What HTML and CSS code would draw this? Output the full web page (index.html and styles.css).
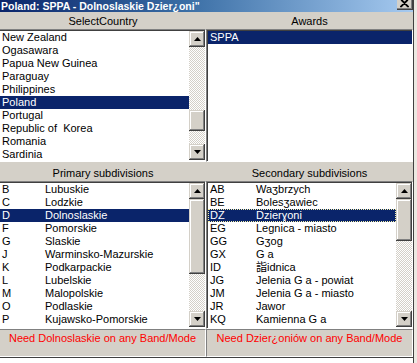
FILE: index.html
```html
<!DOCTYPE html>
<html lang="pl">
<head>
    <meta charset="UTF-8">
    <title>Poland: SPPA</title>
    <link rel="stylesheet" href="styles.css">
</head>
<body>
<div class="screen">
    <div class="window">
        <div class="titlebar">
            <span class="title">Poland: SPPA - Dolnoslaskie Dzier¿oni"</span>
            <span class="close-btn">
                <svg width="9" height="8" viewBox="0 0 9 8"><path d="M1 0 L8 7 M2 0 L9 7 M8 0 L1 7 M7 0 L0 7" stroke="#000" stroke-width="1.1" fill="none"/></svg>
            </span>
        </div>

        <div class="panes">
            <div class="pane-head">SelectCountry</div>
            <div class="pane-head">Awards</div>

            <!-- countries -->
            <div class="listbox first-col">
                <div class="rows">
                    <div class="row">New Zealand</div>
                    <div class="row">Ogasawara</div>
                    <div class="row">Papua New Guinea</div>
                    <div class="row">Paraguay</div>
                    <div class="row">Philippines</div>
                    <div class="row sel">Poland</div>
                    <div class="row">Portugal</div>
                    <div class="row">Republic of&nbsp; Korea</div>
                    <div class="row">Romania</div>
                    <div class="row">Sardinia</div>
                </div>
                <div class="scrollbar">
                    <div class="sb-btn"><svg width="7" height="4" viewBox="0 0 7 4"><path d="M3.5 0 L7 4 L0 4 Z"/></svg></div>
                    <div class="sb-track"><div class="sb-thumb" style="margin-top: 63px; height: 21px;"></div></div>
                    <div class="sb-btn"><svg width="7" height="4" viewBox="0 0 7 4"><path d="M0 0 L7 0 L3.5 4 Z"/></svg></div>
                </div>
            </div>

            <!-- awards -->
            <div class="listbox">
                <div class="rows">
                    <div class="row sel">SPPA</div>
                </div>
            </div>

            <div class="pane-head lower">Primary subdivisions</div>
            <div class="pane-head lower">Secondary subdivisions</div>

            <div class="listbox first-col">
                <div class="rows">
                    <div class="row"><span class="code">B</span>Lubuskie</div>
                    <div class="row"><span class="code">C</span>Lodzkie</div>
                    <div class="row sel"><span class="code">D</span>Dolnoslaskie</div>
                    <div class="row"><span class="code">F</span>Pomorskie</div>
                    <div class="row"><span class="code">G</span>Slaskie</div>
                    <div class="row"><span class="code">J</span>Warminsko-Mazurskie</div>
                    <div class="row"><span class="code">K</span>Podkarpackie</div>
                    <div class="row"><span class="code">L</span>Lubelskie</div>
                    <div class="row"><span class="code">M</span>Malopolskie</div>
                    <div class="row"><span class="code">O</span>Podlaskie</div>
                    <div class="row"><span class="code">P</span>Kujawsko-Pomorskie</div>
                </div>
                <div class="scrollbar">
                    <div class="sb-btn"><svg width="7" height="4" viewBox="0 0 7 4"><path d="M3.5 0 L7 4 L0 4 Z"/></svg></div>
                    <div class="sb-track"><div class="sb-thumb" style="height: 75px;"></div></div>
                    <div class="sb-btn"><svg width="7" height="4" viewBox="0 0 7 4"><path d="M0 0 L7 0 L3.5 4 Z"/></svg></div>
                </div>
            </div>

            <div class="listbox">
                <div class="rows wide-code">
                    <div class="row"><span class="code">AB</span>Waʒbrzych</div>
                    <div class="row"><span class="code">BE</span>Bolesʒawiec</div>
                    <div class="row sel focus"><span class="code">DZ</span>Dzierɣoni</div>
                    <div class="row"><span class="code">EG</span>Legnica - miasto</div>
                    <div class="row"><span class="code">GG</span>Gʒog</div>
                    <div class="row"><span class="code">GX</span>G a</div>
                    <div class="row"><span class="code">ID</span>詣idnica</div>
                    <div class="row"><span class="code">JG</span>Jelenia G a - powiat</div>
                    <div class="row"><span class="code">JM</span>Jelenia G a - miasto</div>
                    <div class="row"><span class="code">JR</span>Jawor</div>
                    <div class="row"><span class="code">KQ</span>Kamienna G a</div>
                </div>
                <div class="scrollbar">
                    <div class="sb-btn"><svg width="7" height="4" viewBox="0 0 7 4"><path d="M3.5 0 L7 4 L0 4 Z"/></svg></div>
                    <div class="sb-track"><div class="sb-thumb" style="height: 42px;"></div></div>
                    <div class="sb-btn"><svg width="7" height="4" viewBox="0 0 7 4"><path d="M0 0 L7 0 L3.5 4 Z"/></svg></div>
                </div>
            </div>

            <div class="status first-col">Need Dolnoslaskie on any Band/Mode</div>
            <div class="status">Need Dzier¿oniów on any Band/Mode</div>
        </div>

        <div class="strip"></div>
    </div>
    <div class="edge"></div>
</div>
</body>
</html>
```

FILE: styles.css
```css
* {
    margin: 0;
    padding: 0;
    box-sizing: border-box;
}

body {
    width: 417px;
    height: 363px;
    overflow: hidden;
    background: #fff;
    font-family: "Liberation Sans", Arial, "Noto Sans CJK SC", sans-serif;
    font-size: 11px;
    color: #000;
}

.screen {
    display: flex;
    height: 363px;
}

.window {
    width: 413px;
    display: flex;
    flex-direction: column;
    background: #d4d0c8;
}

.edge {
    flex: 1;
    border-left: 1px solid #404040;
    background: #ece9e2;
}

/* title bar (cropped at the top) */
.titlebar {
    height: 12px;
    flex: none;
    display: flex;
    align-items: flex-start;
    overflow: hidden;
    background: linear-gradient(to right, #0a246a 0%, #3a6ea5 45%, #a6caf0 100%);
}

.title {
    color: #fff;
    font-weight: bold;
    font-size: 10.5px;
    line-height: 12px;
    padding-left: 1px;
    white-space: nowrap;
}

.close-btn {
    margin-left: auto;
    width: 16px;
    height: 10px;
    flex: none;
    background: #d4d0c8;
    box-shadow: inset -1px -1px #404040, inset -2px -2px #808080;
    display: flex;
    justify-content: center;
    align-items: flex-start;
    padding-right: 1px;
}

/* panes */
.panes {
    display: grid;
    grid-template-columns: 206px 207px;
    grid-template-rows: 17px 133px 19px 148px 28px;
}

.pane-head {
    display: flex;
    align-items: center;
    justify-content: center;
    white-space: nowrap;
}

.pane-head.lower {
    padding-top: 3px;
}

.listbox {
    display: flex;
    background: #fff;
    border: 1px solid;
    border-color: #808080 #fff #fff #808080;
    padding: 1px 0 1px 1px;
    box-shadow: inset 1px 1px #404040;
    overflow: hidden;
}

.listbox.first-col {
    border-left: none;
    padding-left: 0;
    box-shadow: inset 0 1px #404040;
}

.rows {
    flex: 1;
    min-width: 0;
    overflow: hidden;
}

.row {
    display: flex;
    height: 13px;
    line-height: 13px;
    padding-left: 2px;
    white-space: nowrap;
}

.row.sel {
    background: #0a246a;
    color: #fff;
}

.row.focus {
    outline: 1px dotted #f4f0a8;
    outline-offset: -1px;
}

.code {
    width: 43px;
    flex: none;
}

.wide-code .code {
    width: 46px;
}

/* scrollbars */
.scrollbar {
    width: 16px;
    flex: none;
    display: flex;
    flex-direction: column;
}

.sb-btn,
.sb-thumb {
    background: #d4d0c8;
    box-shadow: inset -1px -1px #404040, inset 1px 1px #d4d0c8, inset -2px -2px #808080, inset 2px 2px #fff;
}

.sb-btn {
    height: 16px;
    flex: none;
    display: flex;
    align-items: center;
    justify-content: center;
}

.sb-track {
    flex: 1;
    background: repeating-conic-gradient(#fff 0 25%, #d4d0c8 0 50%) 0 0 / 2px 2px;
}

/* status lines */
.status {
    border: 1px solid;
    border-color: #808080 #fff #fff #808080;
    color: #f00;
    text-align: center;
    line-height: 13px;
    padding-top: 2px;
    white-space: nowrap;
}

.status.first-col {
    border-left: none;
}

.strip {
    flex: 1;
    border-top: 1px solid #404040;
    background: #fff;
}
```
